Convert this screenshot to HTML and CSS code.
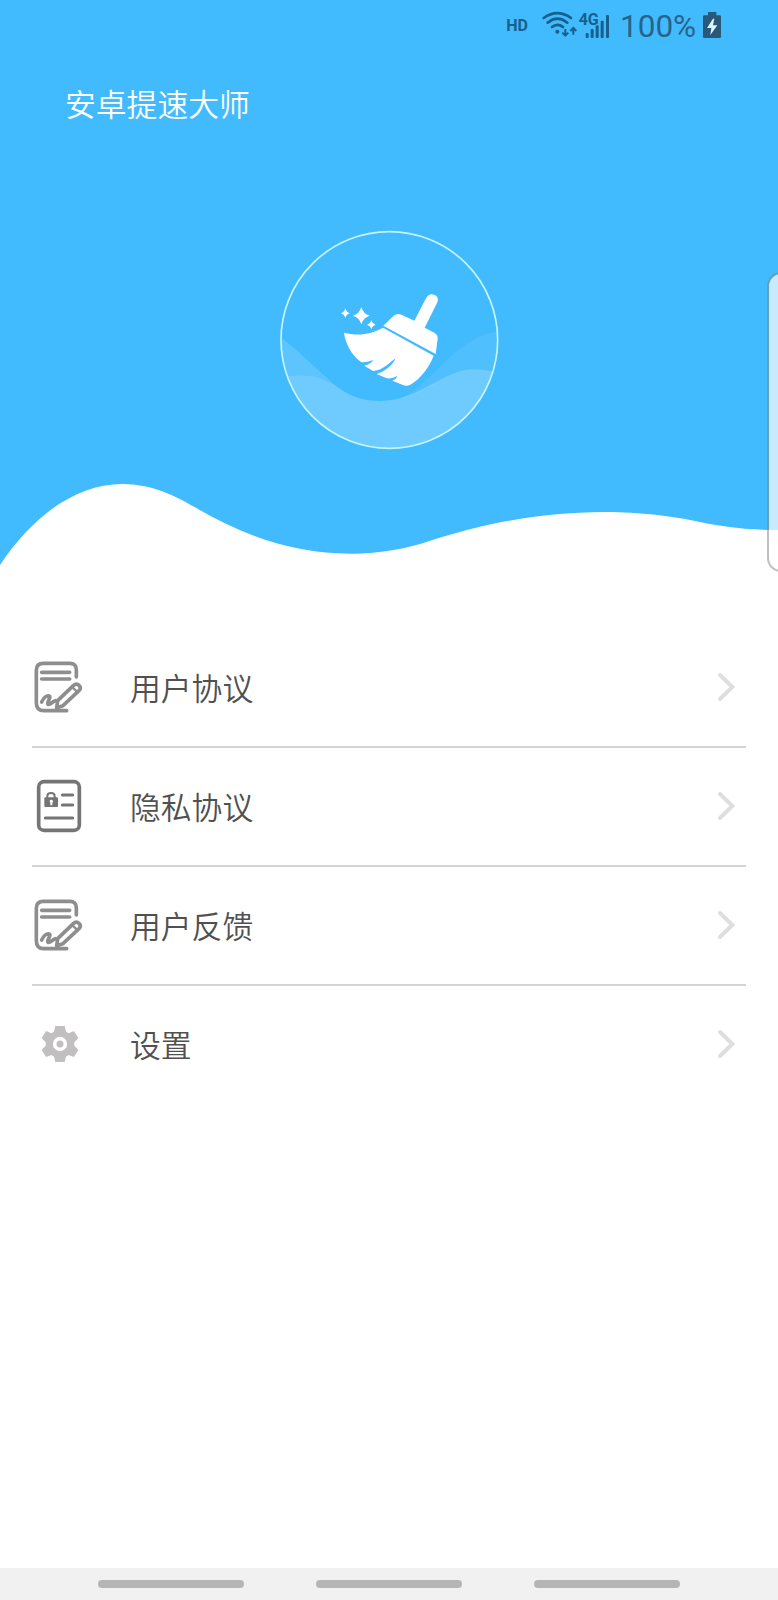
FILE: index.html
```html
<!DOCTYPE html>
<html lang="zh-CN">
<head>
    <meta charset="UTF-8">
    <meta name="viewport" content="width=device-width, initial-scale=1.0">
    <title>安卓提速大师</title>
    <link rel="stylesheet" href="styles.css">
</head>
<body>
    <div class="page">
        <!-- 顶部蓝色区域 -->
        <header class="header">
            <!-- 状态栏 -->
            <div class="status-bar">
                <span class="status-hd">HD</span>
                <svg class="status-signal" viewBox="150 0 210 150">
                    <g fill="none" stroke="#17608c" stroke-width="8" stroke-linecap="round">
                        <path d="M161 54 Q202 25 243 54"/>
                        <path d="M173 68 Q202 44 232 68"/>
                        <path d="M186 81 Q202 68 219 81"/>
                    </g>
                    <circle cx="202" cy="95" r="6" fill="#17608c"/>
                    <g fill="none" stroke="#17608c" stroke-width="6">
                        <path d="M226 87V107M217 98L226 107L235 98"/>
                        <path d="M250 104V84M241 93L250 84L259 93"/>
                    </g>
                    <g fill="#17608c">
                        <rect x="287" y="99" width="9" height="15" rx="3"/>
                        <rect x="302" y="87" width="9" height="27" rx="3"/>
                        <rect x="317" y="76" width="9" height="38" rx="3"/>
                        <rect x="332" y="62" width="9" height="52" rx="3"/>
                        <rect x="348" y="45" width="9" height="69" rx="3"/>
                    </g>
                    <text class="status-4g" x="266" y="74">4G</text>
                </svg>
                <span class="status-percent">100%</span>
                <svg class="status-battery" viewBox="638 36 54 78">
                    <path d="M653 36h25v10h10q4 0 4 4v60q0 4-4 4h-46q-4 0-4-4v-60q0-4 4-4h11z" fill="#28597a"/>
                    <path d="M668 56L650 84H663L660 105L681 76H668L672 56z" fill="#dff3ff"/>
                </svg>
            </div>

            <h1 class="title">安卓提速大师</h1>

            <!-- 圆形扫把图标 -->
            <svg class="logo" viewBox="0 0 720 720">
                <defs>
                    <clipPath id="circle">
                        <circle cx="358" cy="360" r="325"/>
                    </clipPath>
                </defs>
                <g clip-path="url(#circle)" fill="#fff">
                    <path d="M20 343C90 395 150 458 198 498C145 465 90 455 20 478z" fill-opacity=".15"/>
                    <path d="M380 540C500 490 560 335 700 335V465C680 455 650 448 612 448C540 448 480 520 380 540z" fill-opacity=".08"/>
                    <path d="M20 478C90 455 145 465 198 498C240 530 280 543 330 543C450 543 520 448 612 448C650 448 680 455 700 465V720H20z" fill-opacity=".24"/>
                </g>
                <circle cx="358" cy="360" r="325" fill="none" stroke="#c5f5fb" stroke-width="5"/>
                <g fill="#fff">
                    <path d="M433 302L468 235C475 222 482 221 492 224C503 228 507 238 501 249L464 323L493 338Q504 344 503 356L497 402L340 317L367 291Q379 278 394 284z"/>
                    <path d="M339 323L491 407C477 443 452 476 421 494Q409 500 397 494L367 482Q378 478 383 467Q365 477 350 475L320 462C345 454 367 437 377 415C352 433 335 453 309 453L283 437Q302 433 310 420C298 424 287 428 273 426C244 405 226 370 222 338C265 349 306 342 339 323z"/>
                    <path d="M226 265Q229 277 239 280Q229 283 226 294Q223 283 213 280Q223 277 226 265z"/>
                    <path d="M274 261Q280 282 299 287Q280 292 274 313Q268 292 249 287Q268 282 274 261z"/>
                    <path d="M304 300Q307 311 317 314Q307 317 304 327Q301 317 291 314Q301 311 304 300z"/>
                </g>
            </svg>

            <!-- 底部波浪 -->
            <svg class="wave" viewBox="0 0 2334 360">
                <path d="M0 315C100 165 230 72 367 72C455 72 525 107 585 142C745 234 885 281 1053 281C1143 281 1224 265 1288 243C1434 197 1604 156 1816 156C1922 156 2022 170 2086 183C2162 199 2230 210 2334 210V360H0z" fill="#fff"/>
            </svg>
        </header>

        <!-- 菜单列表 -->
        <main class="menu">
            <a href="#agreement" class="menu-item">
                <svg class="menu-icon" viewBox="36 50 156 180">
                    <g fill="none" stroke="#8e8e8e" stroke-width="11" stroke-linecap="round" stroke-linejoin="round">
                        <path d="M169 110V89Q169 68 148 69H70Q49 69 49 90V187Q49 211 72 211H140"/>
                        <path d="M65 96H149M65 116H149"/>
                        <path d="M65 185C70 174 79 165 87 167C96 170 78 188 84 192C90 195 97 184 106 181"/>
                        <path d="M113 181L160 136Q169 127 177 135Q185 143 177 151L129 196L110 202z"/>
                        <path d="M155 139L173 156" stroke-width="7"/>
                    </g>
                </svg>
                <span class="menu-text">用户协议</span>
                <svg class="arrow" viewBox="80 95 60 96"><path d="M92 107L129 143L92 179"/></svg>
            </a>
            <a href="#privacy" class="menu-item">
                <svg class="menu-icon" viewBox="36 408 156 180">
                    <rect x="56" y="425" width="122" height="146" rx="16" fill="none" stroke="#757575" stroke-width="11"/>
                    <path d="M127 465H158M127 495H158M76 534H158" fill="none" stroke="#757575" stroke-width="9" stroke-linecap="round"/>
                    <path d="M82 474V468Q82 459 93 459Q104 459 104 468V474" fill="none" stroke="#757575" stroke-width="6"/>
                    <rect x="73" y="472" width="41" height="29" rx="3" fill="#757575"/>
                    <path d="M94 479a5 5 0 0 1 3 9v8h-6v-8a5 5 0 0 1 3-9z" fill="#fff"/>
                </svg>
                <span class="menu-text">隐私协议</span>
                <svg class="arrow" viewBox="80 95 60 96"><path d="M92 107L129 143L92 179"/></svg>
            </a>
            <a href="#feedback" class="menu-item">
                <svg class="menu-icon" viewBox="36 50 156 180">
                    <g fill="none" stroke="#8e8e8e" stroke-width="11" stroke-linecap="round" stroke-linejoin="round">
                        <path d="M169 110V89Q169 68 148 69H70Q49 69 49 90V187Q49 211 72 211H140"/>
                        <path d="M65 96H149M65 116H149"/>
                        <path d="M65 185C70 174 79 165 87 167C96 170 78 188 84 192C90 195 97 184 106 181"/>
                        <path d="M113 181L160 136Q169 127 177 135Q185 143 177 151L129 196L110 202z"/>
                        <path d="M155 139L173 156" stroke-width="7"/>
                    </g>
                </svg>
                <span class="menu-text">用户反馈</span>
                <svg class="arrow" viewBox="80 95 60 96"><path d="M92 107L129 143L92 179"/></svg>
            </a>
            <a href="#settings" class="menu-item">
                <svg class="menu-icon" viewBox="36 402 156 180">
                    <path d="M106 438H134L138 455L146 460L162 453L175 475L163 487V497L175 509L162 531L146 525L138 530L134 546H106L102 530L94 525L78 531L65 509L77 497V487L65 475L78 453L94 460L102 455z" fill="#c1bfc0"/>
                    <circle cx="120" cy="492" r="16" fill="#c1bfc0" stroke="#fff" stroke-width="11"/>
                </svg>
                <span class="menu-text">设置</span>
                <svg class="arrow" viewBox="80 95 60 96"><path d="M92 107L129 143L92 179"/></svg>
            </a>
        </main>

        <!-- 系统导航栏 -->
        <footer class="nav-bar">
            <span class="nav-line"></span>
            <span class="nav-line"></span>
            <span class="nav-line"></span>
        </footer>

        <!-- 屏幕右侧的边缘面板 -->
        <div class="edge-panel"></div>
    </div>
</body>
</html>
```
FILE: styles.css
```css
* {
    margin: 0;
    padding: 0;
    box-sizing: border-box;
}

body {
    font-family: Roboto, 'Noto Sans CJK SC', sans-serif;
    background-color: #fff;
}

.page {
    position: relative;
    display: flex;
    flex-direction: column;
    width: 778px;
    height: 1600px;
    overflow: hidden;
}

/* 顶部区域 */
.header {
    display: flex;
    flex-direction: column;
    height: 580px;
    background-color: #42bafe;
}

.status-bar {
    display: flex;
    align-items: center;
    justify-content: flex-end;
    height: 50px;
    padding-right: 57px;
}

.status-hd {
    margin-right: 12px;
    font-size: 16px;
    font-weight: 700;
    color: #17608c;
}

.status-signal {
    width: 70px;
    height: 50px;
    margin-right: 10px;
}

.status-4g {
    font-size: 48px;
    font-weight: 700;
    fill: #17608c;
    stroke: #42bafe;
    stroke-width: 5px;
    paint-order: stroke;
}

.status-percent {
    width: 76px;
    padding-top: 2px;
    margin-right: 7px;
    font-size: 31.5px;
    font-weight: 400;
    color: #28648a;
}

.status-battery {
    width: 18px;
    height: 26px;
}

.title {
    height: 110px;
    padding: 30px 0 0 65px;
    font-family: 'Noto Sans CJK SC', sans-serif;
    font-size: 30.8px;
    font-weight: 350;
    line-height: 46px;
    color: #fff;
}

.logo {
    width: 240px;
    height: 240px;
    margin: 60px 0 0 270px;
}

.wave {
    flex-shrink: 0;
    width: 778px;
    height: 120px;
}

/* 菜单列表 */
.menu {
    flex: 1;
    padding: 49px 32px 0;
}

.menu-item {
    display: flex;
    align-items: center;
    height: 119px;
    padding: 0 6px 2px 0;
    border-bottom: 2px solid #d4d4d4;
    color: #505050;
    text-decoration: none;
}

/* 最后一项不显示分割线 */
.menu-item:last-child {
    border-bottom-color: transparent;
}

.menu-icon {
    width: 52px;
    height: 60px;
}

.menu-text {
    flex: 1;
    padding: 1px 0 0 46px;
    font-family: 'Noto Sans CJK SC', sans-serif;
    font-size: 30.8px;
    font-weight: 350;
    line-height: 46px;
}

.arrow {
    width: 20px;
    height: 32px;
    margin-right: 4px;
    fill: none;
    stroke: #dedede;
    stroke-width: 12;
    stroke-linecap: round;
}

/* 底部导航栏 */
.nav-bar {
    display: flex;
    justify-content: center;
    gap: 72px;
    height: 32px;
    padding-top: 12px;
    background-color: #f1f1f1;
}

.nav-line {
    width: 146px;
    height: 8px;
    border-radius: 4px;
    background-color: #b5b5b5;
}

/* 边缘面板浮在内容上面 */
.edge-panel {
    position: absolute;
    top: 272px;
    right: -20px;
    width: 31px;
    height: 300px;
    border: 2px solid rgba(130, 130, 130, 0.5);
    border-radius: 14px;
    background-color: rgba(255, 255, 255, 0.7);
    background-clip: padding-box;
}
```
